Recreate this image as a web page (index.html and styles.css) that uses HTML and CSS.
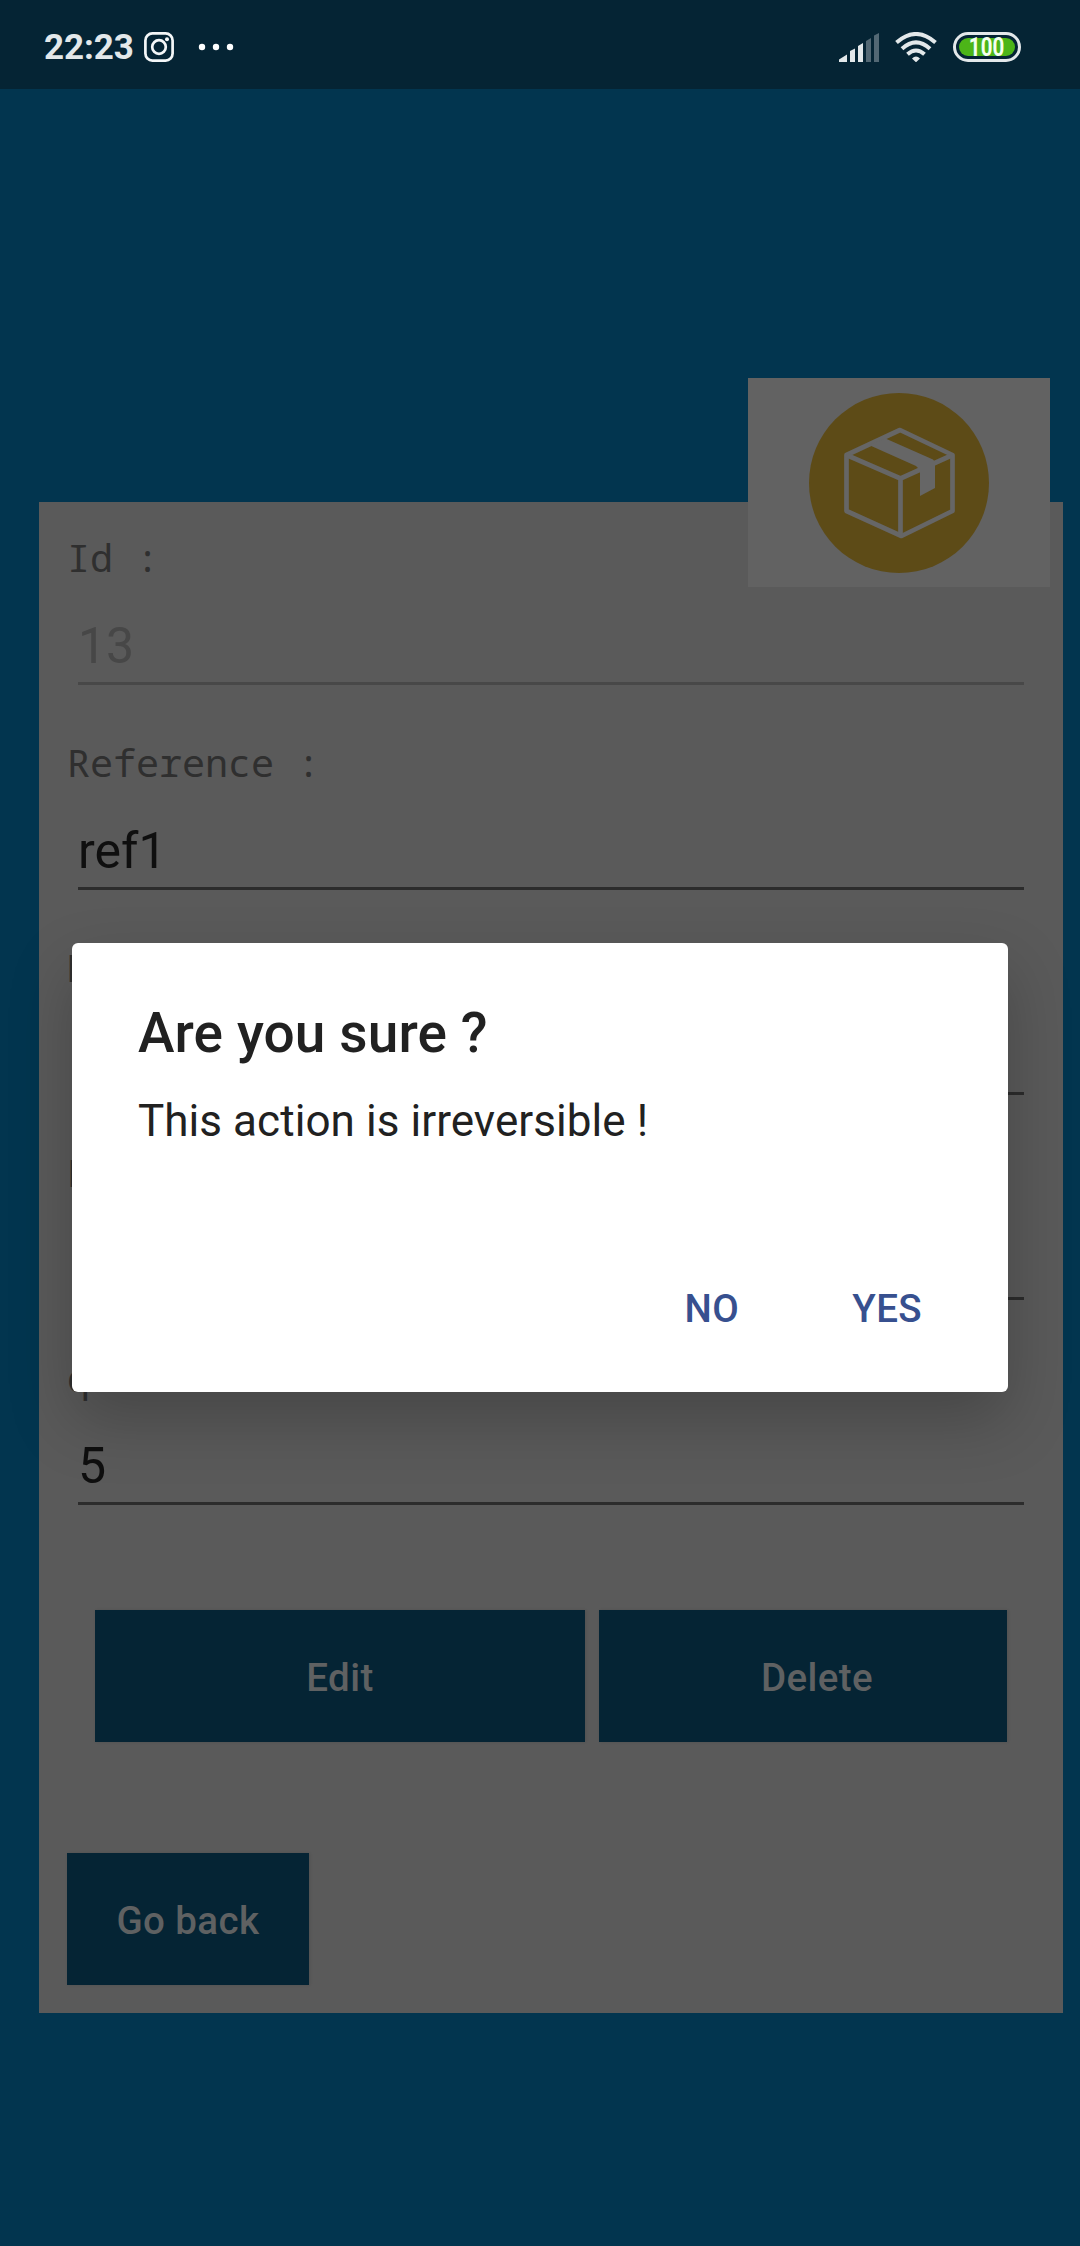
FILE: index.html
```html
<!DOCTYPE html>
<html lang="en">
<head>
<meta charset="utf-8">
<title>Product</title>
<link rel="stylesheet" href="styles.css">
</head>
<body>
<div class="screen">
  <header class="status-bar">
    <span class="clock">22:23</span>
    <svg class="instagram" width="30" height="30" viewBox="0 0 30 30" fill="none" stroke="#f4f7f8" stroke-width="2.7">
      <rect x="1.4" y="1.4" width="27.2" height="27.2" rx="7"/>
      <circle cx="15" cy="15" r="6.8"/>
      <circle cx="23" cy="7.2" r="2" fill="#f4f7f8" stroke="none"/>
    </svg>
    <svg class="more" width="36" height="8" viewBox="0 0 36 8" fill="#fff">
      <circle cx="4" cy="4" r="3.2"/><circle cx="18" cy="4" r="3.2"/><circle cx="32" cy="4" r="3.2"/>
    </svg>
    <svg class="signal" width="40" height="29" viewBox="0 0 40 29" fill="#e3e8ea">
      <path d="M0 29V26.500L8 21.500V29zM11 29V18L16 15.500V29zM19 29V13L24 10V29z"/>
      <path fill="#536874" d="M27 29V8L32 5V29zM35 29V2.500L40 0V29z"/>
    </svg>
    <svg class="wifi" width="42" height="30" viewBox="0 0 42 30" fill="none" stroke="#e3e8ea" stroke-width="4">
      <path d="M1.500 10.500Q21-6.500 40.500 10.500"/>
      <path d="M7 16.700Q21 4 35 16.700"/>
      <path d="M12.500 22.300Q21 14.700 29.500 22.300"/>
      <path fill="#e3e8ea" stroke="none" d="M17 26.500Q21 22.500 25 26.500L21 30.300z"/>
    </svg>
    <span class="battery"><span class="level"><span class="percent">100</span></span></span>
  </header>

  <main class="card">
    <form class="fields">
      <div class="field disabled"><label>Id :</label><div class="value">13</div></div>
      <div class="field"><label>Reference :</label><div class="value">ref1</div></div>
      <div class="field"><label>Name :</label><div class="value"></div></div>
      <div class="field"><label>Price :</label><div class="value"></div></div>
      <div class="field"><label>quantite :</label><div class="value">5</div></div>
    </form>
    <div class="actions">
      <button class="btn edit" type="button">Edit</button>
      <button class="btn delete" type="button">Delete</button>
    </div>
    <button class="btn back" type="button">Go back</button>

    <div class="product-badge">
      <svg width="180" height="180" viewBox="0 0 180 180">
        <circle cx="90" cy="90" r="90" fill="#5d4b17"/>
        <g fill="none" stroke="#666" stroke-width="4.700" stroke-linejoin="round">
          <path d="M91 37L143.500 62V118L92.500 143L37.500 118V62z"/>
          <path d="M37.500 62L91.500 85.500L143.500 62M91.500 85.500V143"/>
        </g>
        <path fill="#666" d="M60 52L76.500 45.500L124 66.500L126 69V95L111 103V77L107 73z"/>
      </svg>
    </div>
  </main>

  <section class="dialog" role="alertdialog">
    <h1>Are you sure ?</h1>
    <p>This action is irreversible !</p>
    <div class="dialog-actions">
      <button type="button">NO</button>
      <button type="button">YES</button>
    </div>
  </section>
</div>
</body>
</html>
```
FILE: styles.css
```css
* { box-sizing: border-box; }

body {
  margin: 0;
  font-family: Roboto, "Liberation Sans", sans-serif;
}

button { border: 0; padding: 0; font: inherit; }

.screen {
  position: relative;
  height: 2246px;
  background: #02354f;
  overflow: hidden;
}

.status-bar {
  display: flex;
  align-items: center;
  height: 89px;
  padding: 5px 59px 0 44px;
  background: #052434;
}

.clock {
  width: 100px;
  padding-top: 2px;
  color: #e3e8ea;
  font-size: 35px;
  font-weight: 700;
  line-height: 40px;
  letter-spacing: -.1px;
  white-space: nowrap;
}

.more { margin-left: 24px; }
.signal { margin-left: auto; }
.wifi { margin-left: 16px; }

.battery {
  display: flex;
  width: 68px;
  height: 30px;
  margin-left: 16px;
  padding: 3px;
  border: 3px solid #e3e8ea;
  border-radius: 15px;
}

.level {
  display: flex;
  flex: 1;
  justify-content: center;
  border-radius: 9px;
  background: #4cb518;
}

.percent {
  color: #f4fff0;
  font-size: 25px;
  font-weight: 700;
  line-height: 20px;
  transform: scaleX(.82);
}

.card {
  position: relative;
  display: flex;
  flex-direction: column;
  width: 1024px;
  height: 1511px;
  margin: 413px 0 0 39px;
  padding: 28px;
  background: #5a5a5a;
}

.field { height: 205px; }

.field label {
  display: block;
  height: 52px;
  color: #2f2f2f;
  font-family: "Droid Sans Mono", "Noto Sans Mono", "DejaVu Sans Mono", monospace;
  font-size: 38.500px;
  line-height: 54px;
  letter-spacing: -.1px;
}

.value {
  height: 103px;
  margin: 0 11px;
  padding-top: 35px;
  border-bottom: 3px solid #2c2c2c;
  color: #0f0f0f;
  font-size: 50px;
  line-height: 58px;
}

.disabled .value { border-color: #484848; color: #474747; }

.actions {
  display: grid;
  grid-template-columns: 490px 408px;
  gap: 14px;
  margin: 55px 0 111px 28px;
}

.btn {
  height: 132px;
  padding-top: 3px;
  background: #052434;
  box-shadow: 1px 0 3px rgba(0, 0, 0, .1);
  color: #5f6162;
  font-size: 38.500px;
  font-weight: 500;
  letter-spacing: .4px;
}

.delete { padding-left: 28px; }

.back { width: 242px; }

.product-badge {
  position: absolute;
  top: -124px;
  right: 13px;
  display: flex;
  align-items: center;
  justify-content: center;
  width: 302px;
  height: 209px;
  background: #626262;
}

.dialog {
  position: absolute;
  top: 943px;
  left: 72px;
  width: 936px;
  height: 449px;
  padding: 57px 66px 0;
  border-radius: 6px;
  background: #fff;
  box-shadow: 0 28px 64px rgba(0, 0, 0, .22);
  color: #212121;
}

.dialog h1 {
  margin: 0;
  font-size: 55px;
  font-weight: 500;
  line-height: 66px;
  letter-spacing: .1px;
}

.dialog p {
  margin: 25px 0 0;
  font-size: 44px;
  line-height: 60px;
  letter-spacing: .06px;
}

.dialog-actions {
  display: flex;
  justify-content: flex-end;
  gap: 113px;
  margin-top: 128px;
  padding-right: 20px;
}

.dialog-actions button {
  background: none;
  color: #37508f;
  font-size: 38.500px;
  font-weight: 500;
  line-height: 60px;
  letter-spacing: .4px;
}
```
